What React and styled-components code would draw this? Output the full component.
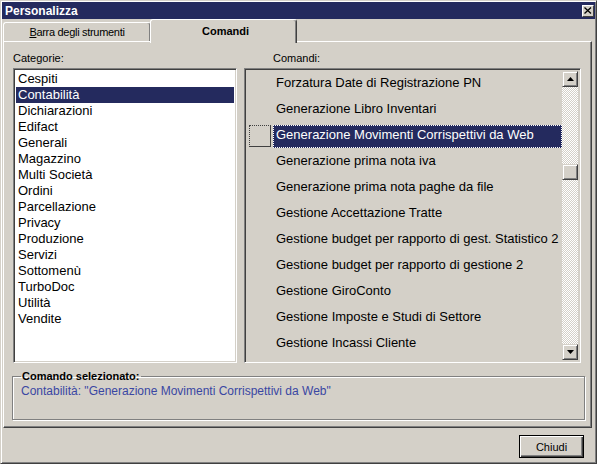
import React from 'react';
import styled, { createGlobalStyle } from 'styled-components';

const GlobalStyle = createGlobalStyle`
    html, body {
        margin: 0;
        padding: 0;
        background: #d4d0c8;
    }
    * {
        box-sizing: border-box;
    }
`;

const Window = styled.div`
    width: 597px;
    height: 464px;
    background: #d4d0c8;
    border: 1px solid;
    border-color: #d4d0c8 #404040 #404040 #d4d0c8;
    box-shadow: inset 1px 1px #ffffff, inset -1px -1px #808080;
    padding: 1px 4px 0 2px;
    display: flex;
    flex-direction: column;
    font-family: "Liberation Sans", Arial, sans-serif;
    color: #000;
`;

const TitleBar = styled.div`
    height: 17px;
    margin: 0 -3px 0 -1px;
    background: #242a5e;
    display: flex;
    align-items: center;
    justify-content: space-between;
    padding: 0 1px 0 3px;
    color: #fff;
    font-weight: bold;
    font-size: 12px;
`;

const CloseBox = styled.div`
    width: 12px;
    height: 12px;
    background: #d4d0c8;
    border: 1px solid;
    border-color: #ffffff #404040 #404040 #ffffff;
    display: flex;
    align-items: center;
    justify-content: center;
`;

const TabRow = styled.div`
    height: 22px;
    display: flex;
    align-items: flex-end;
    position: relative;
    z-index: 1;
`;

const Tab = styled.div`
    width: ${p => p.$width}px;
    height: ${p => (p.$active ? 24 : 19)}px;
    margin-bottom: ${p => (p.$active ? -2 : 0)}px;
    margin-left: ${p => (p.$active ? -1 : 0)}px;
    background: #d4d0c8;
    border-top: 1px solid #ffffff;
    border-left: 1px solid #ffffff;
    border-right: 1px solid #404040;
    box-shadow: inset -1px 0 #808080;
    border-radius: 3px 3px 0 0;
    display: flex;
    align-items: center;
    justify-content: center;
    font-size: 11px;
    font-weight: ${p => (p.$active ? 'bold' : 'normal')};
    letter-spacing: ${p => (p.$active ? '0' : '-0.3px')};
    padding-bottom: ${p => (p.$active ? 2 : 0)}px;
    padding-left: ${p => (p.$active ? 4 : 0)}px;

    u {
        text-decoration: underline;
    }
`;

const Panel = styled.div`
    height: 387px;
    border: 1px solid;
    border-color: #ffffff #404040 #404040 #ffffff;
    box-shadow: inset -1px -1px #808080;
    padding: 9px 8px 0 9px;
    display: flex;
    flex-direction: column;
`;

const Columns = styled.div`
    display: flex;
    gap: 7px;
`;

const Column = styled.div`
    width: ${p => p.$width}px;
    display: flex;
    flex-direction: column;
`;

const Label = styled.div`
    font-size: 11px;
    height: 17px;
    padding-left: ${p => p.$indent || 0}px;
    padding-top: 1px;
`;

const Sunken = styled.div`
    height: 295px;
    border: 1px solid;
    border-color: #808080 #ffffff #ffffff #808080;
    box-shadow: inset 1px 1px #404040, inset -1px -1px #d4d0c8;
    padding: 2px;
`;

const ListBox = styled(Sunken)`
    background: #ffffff;
`;

const ListItem = styled.div`
    height: 16px;
    line-height: 15px;
    font-size: 13px;
    padding-left: 2px;
    background: ${p => (p.$selected ? '#242a5e' : 'transparent')};
    color: ${p => (p.$selected ? '#ffffff' : '#000000')};
`;

const CmdList = styled(Sunken)`
    background: #d4d0c8;
    display: flex;
`;

const CmdRows = styled.div`
    flex: 1;
    display: flex;
    flex-direction: column;
`;

const CmdRow = styled.div`
    height: 26px;
    display: flex;
    align-items: center;
    gap: 2px;
    padding-left: 2px;
`;

const CmdIcon = styled.div`
    width: 22px;
    height: 22px;
    flex: none;
    border-style: ${p => (p.$visible ? 'dotted solid solid dotted' : 'none')};
    border-width: 1px;
    border-color: #404040;
`;

const CmdText = styled.div`
    flex: 1;
    height: 23px;
    display: flex;
    align-items: center;
    padding: 0 0 3px 3px;
    font-size: 13px;
    background: ${p => (p.$selected ? '#242a5e' : 'transparent')};
    color: ${p => (p.$selected ? '#ffffff' : '#000000')};
    outline: ${p => (p.$selected ? '1px dotted #ffffff' : 'none')};
    outline-offset: -1px;
`;

const ScrollBar = styled.div`
    width: 16px;
    flex: none;
    display: flex;
    flex-direction: column;
    background: repeating-conic-gradient(#ffffff 0 25%, #d4d0c8 0 50%) 0 0 / 2px 2px;
`;

const ScrollButton = styled.div`
    width: 16px;
    height: 16px;
    flex: none;
    background: #d4d0c8;
    border: 1px solid;
    border-color: #d4d0c8 #404040 #404040 #d4d0c8;
    box-shadow: inset 1px 1px #ffffff, inset -1px -1px #808080;
    display: flex;
    align-items: center;
    justify-content: center;
    margin-top: ${p => p.$offset || 0}px;
`;

const Track = styled.div`
    flex: 1;
`;

const GroupBox = styled.fieldset`
    margin: 7px -2px 0 -1px;
    padding: 0 8px 0 8px;
    height: 50px;
    border: 1px solid #808080;
    box-shadow: inset 1px 1px #ffffff, 1px 1px #ffffff;
`;

const Legend = styled.legend`
    font-size: 11px;
    font-weight: bold;
    padding: 0 2px 0 1px;
`;

const GroupText = styled.div`
    font-size: 12px;
    color: #3a47a3;
    padding-top: 2px;
`;

const Footer = styled.div`
    display: flex;
    justify-content: flex-end;
    padding: 7px 8px 0 0;
`;

const Button = styled.div`
    width: 65px;
    height: 23px;
    border: 1px solid #000000;
    background: #d4d0c8;
    box-shadow: inset 1px 1px #ffffff, inset -1px -1px #404040, inset -2px -2px #808080;
    display: flex;
    align-items: center;
    justify-content: center;
    font-size: 11px;
`;

const categories = [
    'Cespiti', 'Contabilità', 'Dichiarazioni', 'Edifact', 'Generali', 'Magazzino',
    'Multi Società', 'Ordini', 'Parcellazione', 'Privacy', 'Produzione', 'Servizi',
    'Sottomenù', 'TurboDoc', 'Utilità', 'Vendite',
];

const commands = [
    'Forzatura Date di Registrazione PN',
    'Generazione Libro Inventari',
    'Generazione Movimenti Corrispettivi da Web',
    'Generazione prima nota iva',
    'Generazione prima nota paghe da file',
    'Gestione Accettazione Tratte',
    'Gestione budget per rapporto di gest. Statistico 2',
    'Gestione budget per rapporto di gestione 2',
    'Gestione GiroConto',
    'Gestione Imposte e Studi di Settore',
    'Gestione Incassi Cliente',
];

const Arrow = ({ down }) => (
    <svg width="7" height="4" viewBox="0 0 7 4">
        <path d={down ? 'M0 0H7L3.5 4Z' : 'M0 4H7L3.5 0Z'} fill="#000" />
    </svg>
);

function App() {
    const selectedCategory = 1;
    const selectedCommand = 2;

    return (
        <Window>
            <GlobalStyle />
            <TitleBar>
                <span>Personalizza</span>
                <CloseBox>
                    <svg width="8" height="7" viewBox="0 0 8 7">
                        <path d="M0.5 0.5L7 6.5M7 0.5L0.5 6.5" stroke="#000" strokeWidth="1.3" />
                    </svg>
                </CloseBox>
            </TitleBar>
            <TabRow>
                <Tab $width={148}><span><u>B</u>arra degli strumenti</span></Tab>
                <Tab $width={147} $active>Comandi</Tab>
            </TabRow>
            <Panel>
                <Columns>
                    <Column $width={224}>
                        <Label>Categorie:</Label>
                        <ListBox>
                            {categories.map((name, key) =>
                                <ListItem key={key} $selected={key === selectedCategory}>{name}</ListItem>
                            )}
                        </ListBox>
                    </Column>
                    <Column $width={337}>
                        <Label $indent={29}>Comandi:</Label>
                        <CmdList>
                            <CmdRows>
                                {commands.map((name, key) =>
                                    <CmdRow key={key}>
                                        <CmdIcon $visible={key === selectedCommand} />
                                        <CmdText $selected={key === selectedCommand}>{name}</CmdText>
                                    </CmdRow>
                                )}
                            </CmdRows>
                            <ScrollBar>
                                <ScrollButton><Arrow /></ScrollButton>
                                <Track>
                                    <ScrollButton $offset={77} />
                                </Track>
                                <ScrollButton><Arrow down /></ScrollButton>
                            </ScrollBar>
                        </CmdList>
                    </Column>
                </Columns>
                <GroupBox>
                    <Legend>Comando selezionato:</Legend>
                    <GroupText>Contabilità: "Generazione Movimenti Corrispettivi da Web"</GroupText>
                </GroupBox>
            </Panel>
            <Footer>
                <Button>Chiudi</Button>
            </Footer>
        </Window>
    );
}

export default App;
